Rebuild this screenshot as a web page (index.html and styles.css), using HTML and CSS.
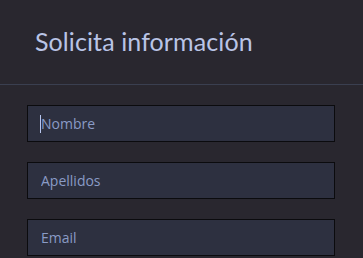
FILE: index.html
```html
<!DOCTYPE html>
<html lang="es">
<head>
<meta charset="utf-8">
<title>Solicita información</title>
<link rel="stylesheet" href="styles.css">
</head>
<body>
<div class="panel">
  <header class="panel-head">
    <h2 class="title">Solicita información</h2>
  </header>
  <form class="form">
    <div class="field field-focus">
      <span class="caret"></span>
      <input class="input" type="text" placeholder="Nombre">
    </div>
    <div class="field">
      <input class="input" type="text" placeholder="Apellidos">
    </div>
    <div class="field">
      <input class="input" type="email" placeholder="Email">
    </div>
  </form>
</div>
</body>
</html>
```

FILE: styles.css
```css
html, body {
  margin: 0;
  padding: 0;
  background: #29272f;
  height: 100%;
  overflow: hidden;
}
.panel {
  font-family: "Open Sans", "Noto Sans", sans-serif;
}
.panel-head {
  height: 85px;
  border-bottom: 1px solid #3a3f50;
  box-sizing: border-box;
  padding: 25px 0 0 35px;
}
.title {
  margin: 0;
  font-family: Lato, "Open Sans", sans-serif;
  font-weight: 400;
  font-size: 25px;
  line-height: 32px;
  color: #b9c4e6;
  letter-spacing: 0.1px;
}
.form {
  display: flex;
  flex-direction: column;
  gap: 20px;
  padding: 20px 0 0 27px;
}
.field {
  position: relative;
  width: 308px;
  height: 37px;
}
.input {
  box-sizing: border-box;
  width: 100%;
  height: 100%;
  margin: 0;
  background: #2d3040;
  border: 1px solid #0b0b0e;
  padding: 0 0 0 13px;
  font-family: "Open Sans", "Noto Sans", sans-serif;
  font-size: 14px;
  color: #c0cbec;
  outline: none;
}
.input::placeholder {
  color: #8a9bc6;
  opacity: 1;
}
.caret {
  position: absolute;
  left: 13px;
  top: 10px;
  width: 1px;
  height: 18px;
  background: #b8c6ee;
}
```
